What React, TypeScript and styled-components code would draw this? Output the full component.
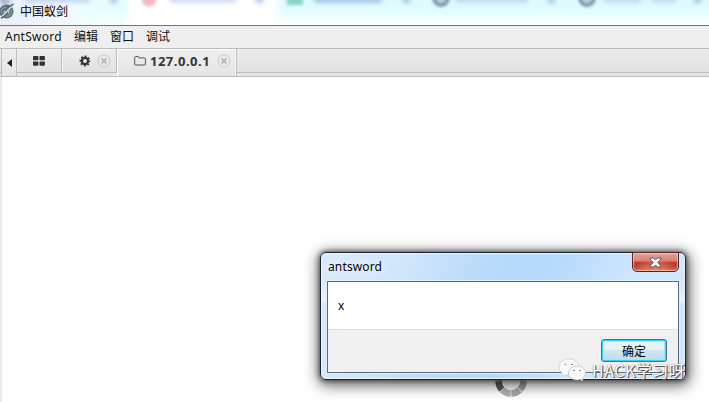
import React from "react";
import styled, { createGlobalStyle } from "styled-components";

const ui = `"Noto Sans", "Noto Sans CJK SC", sans-serif`;
const cjk = `"Noto Sans CJK SC", sans-serif`;

const Global = createGlobalStyle`
  * { box-sizing: border-box; }
  body { margin: 0; background: #fff; overflow: hidden; font-family: ${ui}; color: #111; }
`;

const Window = styled.main`
  position: relative;
  width: 709px;
  height: 402px;
  display: flex;
  flex-direction: column;
  background: #fff;
  overflow: hidden;
`;

const TitleBar = styled.header`
  position: relative;
  height: 26px;
  flex: none;
  overflow: hidden;
  border-bottom: 1px solid #6c7979;
  background:
    linear-gradient(90deg, #e9effb 0, #f2f7fe 60px, rgba(240, 253, 255, 0.6) 90px, rgba(236, 253, 255, 0.5) 124px, #fff 132px, #fff 272px, rgba(255, 255, 255, 0) 284px),
    linear-gradient(#ddfbff 0, #e0fdff 12px, #f1feff 17px, #fafffe 25px);
`;

const Backdrop = styled.svg`
  position: absolute;
  inset: 0;
`;

const Brand = styled.div`
  position: relative;
  display: flex;
  align-items: center;
  height: 21px;
  gap: 6px;
  font: 12px/21px ${cjk};
  color: #000;
  svg { flex: none; }
`;

const MenuBar = styled.nav`
  display: flex;
  flex: none;
  height: 22px;
  padding-left: 5px;
  gap: 12px;
  background: #efefef;
  font: 12px/20px ${cjk};
`;

const MenuItem = styled.span<{ $latin?: boolean }>`
  white-space: nowrap;
  color: #111;
  ${(p) => p.$latin && `font-family: ${ui}; width: 57px; font-size: 12px; line-height: 21px; letter-spacing: 0.25px;`}
`;

const TabBar = styled.div`
  display: flex;
  flex: none;
  height: 29px;
  padding-left: 1px;
  border-top: 1px solid #bcbcbc;
  border-bottom: 1px solid #bcbcbc;
  background: linear-gradient(#ebebeb, #e2e2e2 23px, #bcbcbc 23px, #bcbcbc 24px, #e6e6e6 24px);
`;

const ScrollButton = styled.div`
  display: flex;
  align-items: center;
  justify-content: center;
  width: 16px;
  background: linear-gradient(#eee, #e4e4e4);
  border: solid #bcbcbc;
  border-width: 0 1px;
`;

const Tab = styled.div<{ $width: number; $active?: boolean; $left: number }>`
  display: flex;
  align-items: center;
  width: ${(p) => p.$width}px;
  height: ${(p) => (p.$active ? 27 : 24)}px;
  padding-left: ${(p) => p.$left}px;
  padding-bottom: ${(p) => (p.$active ? 3 : 0)}px;
  border-right: 1px solid #bcbcbc;
  border-bottom: ${(p) => (p.$active ? "none" : "1px solid #bcbcbc")};
  background: ${(p) => (p.$active ? "linear-gradient(#efefef, #e4e4e4)" : "linear-gradient(#ededed, #e2e2e2)")};
  box-shadow: inset 1px 1px ${(p) => (p.$active ? "#fff" : "#f3f3f3")}${(p) => (p.$active ? ", inset -1px 0 #f8f8f8" : "")};
  svg { flex: none; }
`;

const TabLabel = styled.b`
  width: 60px;
  margin: 0 7px 0 3px;
  font: bold 13px/22px ${ui};
  letter-spacing: 0.5px;
  color: #333;
`;

const GearGroup = styled.span`
  display: flex;
  align-items: center;
  gap: 6px;
`;

const Workspace = styled.section`
  flex: 1;
  border-left: 2px solid #eaeaea;
  background: #fff;
`;

const Spinner = styled.svg`
  position: absolute;
  left: 494px;
  top: 364px;
`;

const Dialog = styled.section`
  position: absolute;
  left: 320px;
  top: 252px;
  width: 366px;
  height: 128px;
  padding: 0 6px 6px;
  border: 1px solid #18202b;
  border-radius: 6px;
  background:
    linear-gradient(rgba(255, 255, 255, 0) 29px, rgba(255, 255, 255, 0.55) 48px, rgba(255, 255, 255, 0) 50px),
    linear-gradient(115deg, #d9eafc 0, #d2e6fb 20%, #b8dafb 42%, #b5d9fc 54%, #d2e8fe 80%, #cce4fc 100%);
  box-shadow: inset 0 0 0 1px #edf7ff, 0 0 5px 1px rgba(0, 0, 0, 0.5), 1px 3px 14px 3px rgba(0, 0, 0, 0.57);
`;

const Caption = styled.div`
  display: flex;
  justify-content: space-between;
  height: 28px;
  padding-left: 1px;
  font: 12px/27px ${ui};
  letter-spacing: 0.14px;
  color: #000;
`;

const CaptionText = styled.span`
  text-shadow: 0 0 6px #fff, 0 0 9px #fff;
`;

const CloseButton = styled.button`
  display: flex;
  align-items: center;
  justify-content: center;
  width: 47px;
  height: 20px;
  margin-top: -1px;
  padding: 0;
  border: 1px solid #52242b;
  border-radius: 0 0 5px 5px;
  background: radial-gradient(ellipse at 50% 110%, #e68465 0, rgba(214, 97, 66, 0) 65%),
    linear-gradient(#e4a49c 0, #d67e73 46%, #be3929 50%, #c1442f 75%, #d5705a);
  box-shadow: inset 0 0 0 1px rgba(255, 215, 205, 0.6);
`;

const Panel = styled.div`
  width: 352px;
  height: 92px;
  border: 1px solid #596979;
  box-shadow: 0 0 0 1px #dff0ff;
  background: #f0f0f0;
`;

const Message = styled.div`
  height: 48px;
  padding-left: 10px;
  border-bottom: 1px solid #dfdfdf;
  background: #fff;
  font: 12px/47px ${ui};
  color: #000;
`;

const Actions = styled.div`
  display: flex;
  justify-content: flex-end;
  padding: 9px 11px 0 0;
`;

const OkButton = styled.button`
  width: 66px;
  height: 23px;
  padding: 0;
  border: 1px solid #39799e;
  border-radius: 3px;
  background: linear-gradient(#edf5f9 0, #e5f0f6 48%, #d2e6f0 50%, #bfdceb);
  box-shadow: inset 0 0 0 1px #38cdf6, inset 0 0 1px 2px #a4e5fa;
  font: 12px/19px ${cjk};
  color: #000;
`;

const Watermark = styled.div`
  position: absolute;
  left: 558px;
  top: 358px;
  display: flex;
  align-items: flex-start;
  gap: 5px;
  svg { flex: none; }
`;

const WatermarkText = styled.span`
  white-space: nowrap;
  font: 16px/25px ${cjk};
  letter-spacing: 0.5px;
  color: #fff;
  text-shadow: 1px 1px 0 #555, 1px 0 1px #777, -0.5px 0 1px #999;
`;

const CloseIcon = () => (
  <svg width="14" height="14" viewBox="0 0 14 14" fill="none">
    <circle cx="7" cy="7" r="6" stroke="#cacaca" />
    <path d="M4.6 4.6l4.8 4.8M9.4 4.6L4.6 9.4" stroke="#b7b7b7" strokeWidth="1.8" />
  </svg>
);

const segments = ["#a7a5a5", "#bbb5b5", "#a39f9f", "#a9a7a7", "#b5b2b2", "#5c5c5c", "#777", "#888"];

export default function App() {
  return (
    <>
      <Global />
      <Window>
        <TitleBar>
          <Backdrop width="709" height="25">
            <defs>
              <filter id="soft" x="-20%" y="-200%" width="140%" height="500%">
                <feGaussianBlur stdDeviation="1.8" />
              </filter>
              <filter id="softer" filterUnits="userSpaceOnUse" x="0" y="-20" width="709" height="50">
                <feGaussianBlur stdDeviation="2.6" />
              </filter>
            </defs>
            <g filter="url(#soft)" opacity=".85">
              <circle cx="149" cy="-1" r="7.5" fill="#efb0b8" />
              <path d="M287-4h16V5h-16z" fill="#7dcbbd" />
              <circle cx="441" cy="-2" r="7" fill="#b8cbd8" stroke="#63778f" strokeWidth="3.5" />
              <circle cx="587" cy="-2" r="7" fill="#b8cbd8" stroke="#63778f" strokeWidth="3.5" />
            </g>
            <g filter="url(#softer)" opacity=".65">
              <path d="M26-1h64M170-1h66M456-1h72M604-1h37M652-1h24" stroke="#a3bce8" strokeWidth="6" />
              <path d="M314-1h68" stroke="#839ed0" strokeWidth="7" />
              <path d="M0 0h10" stroke="#8490bd" strokeWidth="10" />
              <path d="M110-1h7M256-1h7M403-1h7M548-1h7M694-1h7" stroke="#83a2dd" strokeWidth="8" />
            </g>
          </Backdrop>
          <Brand>
            <svg width="14" height="19" viewBox="0 0 14 19">
              <circle cx="6.5" cy="10.5" r="7" fill="#5c6f79" />
              <path d="M1.8 13Q0 7 6 6M6 15.5q6-1 5.5-7" fill="none" stroke="#82969f" strokeWidth="1.5" />
              <path d="M0 17.5L13 4" stroke="#edf3f5" strokeWidth="1.1" />
              <path d="M5 9.5q-1.5 1 0 3M8 8q2 2 0 4.5" fill="none" stroke="#c0ccd1" strokeWidth="1.2" />
              <path d="M10 5.5l3.5-2.5M1 17.5l2.5-2" stroke="#41535d" strokeWidth="1.5" />
            </svg>
            <span>中国蚁剑</span>
          </Brand>
        </TitleBar>
        <MenuBar>
          <MenuItem $latin>AntSword</MenuItem>
          <MenuItem>编辑</MenuItem>
          <MenuItem>窗口</MenuItem>
          <MenuItem>调试</MenuItem>
        </MenuBar>
        <TabBar>
          <ScrollButton>
            <svg width="5" height="8"><path d="M5 0v8L0 4z" fill="#222" /></svg>
          </ScrollButton>
          <Tab $width={45} $left={16}>
            <svg width="12" height="10" fill="#333">
              <rect width="5.4" height="4.3" rx=".7" /><rect x="6.5" width="5.4" height="4.3" rx=".7" />
              <rect y="5.4" width="5.4" height="4.3" rx=".7" /><rect x="6.5" y="5.4" width="5.4" height="4.3" rx=".7" />
            </svg>
          </Tab>
          <Tab $width={55} $left={17}>
            <GearGroup>
              <svg width="12" height="12" viewBox="-6 -6 12 12" fill="none" stroke="#333">
                <circle r="3.1" strokeWidth="2.2" />
                <circle r="4.7" strokeWidth="1.5" strokeDasharray="1.9 1.79" strokeDashoffset=".95" />
              </svg>
              <CloseIcon />
            </GearGroup>
          </Tab>
          <Tab $width={120} $left={17} $active>
            <svg width="13" height="12" viewBox="0 0 13 12" fill="none" stroke="#555">
              <path d="M.7 9V2.5q0-1 1-1h2.2q1 0 1 1v.4h5.5q1 0 1 1V9q0 1-1 1H1.7q-1 0-1-1z" />
            </svg>
            <TabLabel>127.0.0.1</TabLabel>
            <CloseIcon />
          </Tab>
        </TabBar>
        <Workspace />
        <Spinner width="34" height="34" viewBox="-17 -17 34 34" fill="none">
          {segments.map((color, i) => (
            <path key={color} d="M.3-12.5A12.5 12.5 0 0 1 8.6-9.05" stroke={color} strokeWidth="6.5" transform={`rotate(${i * 45})`} />
          ))}
        </Spinner>
        <Dialog>
          <Caption>
            <CaptionText>antsword</CaptionText>
            <CloseButton aria-label="Close">
              <svg width="13" height="11" viewBox="0 0 13 11">
                <path d="M1 1h3.5l2 2 2-2H12v1L8.8 5.5 12 9v1H8.5l-2-2-2 2H1V9l3.2-3.5L1 2z" fill="#f7f7f7" stroke="#535a70" />
              </svg>
            </CloseButton>
          </Caption>
          <Panel>
            <Message>x</Message>
            <Actions><OkButton>确定</OkButton></Actions>
          </Panel>
        </Dialog>
        <Watermark>
          <svg width="29" height="25" viewBox="0 0 29 25">
            <path d="M11 1C5 1 1.2 4.5 1.2 9c0 2.8 1.4 5 3.5 6.5L4 18.5l3.6-1.8c1 .3 2.2.4 3.4.4 6 0 10-3.5 10-8S17 1 11 1z" fill="#f8f8f8" stroke="#c9c9c9" strokeWidth=".7" />
            <path d="M19 8c-5 0-8.5 3-8.5 7s3.5 7 8.5 7c1.2 0 2.2-.2 3.2-.5L25 23l-.7-2.8c1.9-1.3 3.2-3 3.2-5.2 0-4-3.5-7-8.5-7z" fill="#fafafa" stroke="#b9b9b9" strokeWidth=".7" />
            <path d="M6.3 6.7q1-1 2 0M13 6.7q1-1 2 0M15 12.7q1-1 2 0M21 12.7q1-1 2 0" fill="none" stroke="#858585" />
          </svg>
          <WatermarkText>HACK学习呀</WatermarkText>
        </Watermark>
      </Window>
    </>
  );
}
